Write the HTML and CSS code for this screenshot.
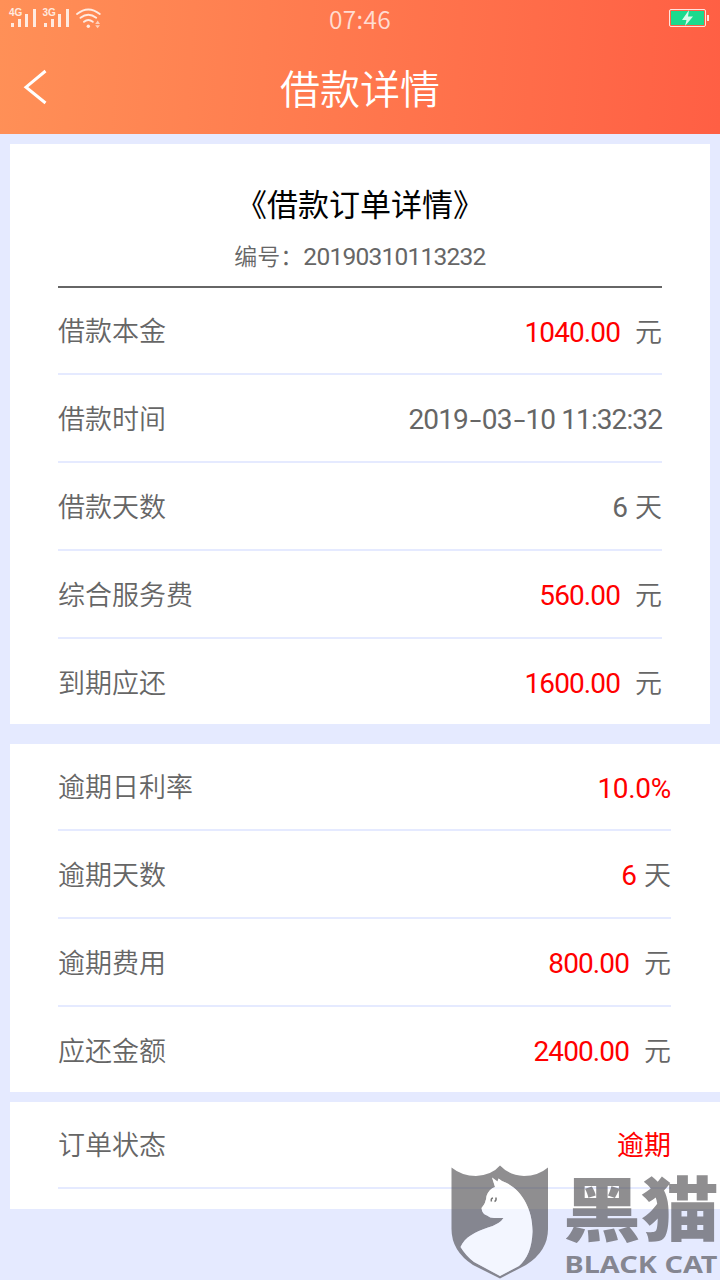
FILE: index.html
```html
<!DOCTYPE html>
<html lang="zh-CN">
<head>
    <meta charset="UTF-8">
    <meta name="viewport" content="width=device-width, initial-scale=1.0">
    <title>借款详情</title>
    <link rel="stylesheet" href="styles.css">
</head>
<body>
    <header class="header">
        <!-- Status bar -->
        <div class="status-bar">
            <svg class="signals" width="104" height="32" viewBox="0 0 104 32">
                <g fill="#fff" fill-opacity=".82">
                    <text x="9" y="16" class="net">4G</text>
                    <path d="M11 23h3v4h-3zM18 19h3v8h-3zM25 14h3v13h-3zM33 9h3v18h-3z"/>
                    <text x="42.5" y="16" class="net">3G</text>
                    <path d="M44 23h3v4h-3zM51 19h3v8h-3zM58 14h3v13h-3zM66 9h3v18h-3z"/>
                    <circle cx="88.3" cy="26.2" r="1.7"/>
                    <path d="M95.2 24l2.5-3.5 2.3 3.5zM95.2 25.2h4.8l-2.4 3z" fill-opacity=".6"/>
                </g>
                <g fill="none" stroke="#fff" stroke-opacity=".82" stroke-width="1.9" stroke-linecap="round">
                    <path d="M77 14Q88.3 4.8 99.8 14M80.5 17.8Q88.3 11.8 96.2 17.8M84 21.8Q88.3 18.2 92.8 21.8"/>
                </g>
            </svg>
            <span class="clock">07:46</span>
            <svg class="battery" width="42" height="32" viewBox="0 0 42 32">
                <rect x="1.5" y="9.5" width="36" height="17" rx="1.5" fill="none" stroke="#fff" stroke-opacity=".82"/>
                <rect x="3" y="11" width="33" height="14" fill="#1bda8d"/>
                <path d="M21 10l-7 10h4.500l-1.500 6 8-9.500h-5z" fill="#d8faea"/>
                <path d="M39 15h2v6h-2z" fill="#fff" fill-opacity=".82"/>
            </svg>
        </div>
        <div class="nav">
            <svg class="back" width="26" height="40" viewBox="0 0 26 40">
                <path d="M22.500 4L3 20.200l19.500 15.800" fill="none" stroke="#fff" stroke-width="3"/>
            </svg>
            <h1>借款详情</h1>
        </div>
    </header>

    <!-- Order detail -->
    <section class="card order">
        <div class="order-head">
            <h2>《借款订单详情》</h2>
            <p>编号：<span class="serial">20190310113232</span></p>
        </div>
        <div class="rows">
            <div class="row"><span>借款本金</span><span class="value"><b class="num">1040.00</b><i class="unit">元</i></span></div>
            <div class="row"><span>借款时间</span><span class="value date">2019<s>-</s>03<s>-</s>10 11:32:32</span></div>
            <div class="row"><span>借款天数</span><span class="value">6<i class="unit day">天</i></span></div>
            <div class="row"><span>综合服务费</span><span class="value"><b class="num">560.00</b><i class="unit">元</i></span></div>
            <div class="row"><span>到期应还</span><span class="value"><b class="num">1600.00</b><i class="unit">元</i></span></div>
        </div>
    </section>

    <!-- Overdue -->
    <section class="card overdue">
        <div class="rows">
            <div class="row"><span>逾期日利率</span><span class="value"><b class="num percent">10.0%</b></span></div>
            <div class="row"><span>逾期天数</span><span class="value"><b class="num">6</b><i class="unit day">天</i></span></div>
            <div class="row"><span>逾期费用</span><span class="value"><b class="num">800.00</b><i class="unit">元</i></span></div>
            <div class="row"><span>应还金额</span><span class="value"><b class="num">2400.00</b><i class="unit">元</i></span></div>
        </div>
    </section>

    <!-- Status -->
    <section class="card status">
        <div class="row"><span>订单状态</span><span class="state">逾期</span></div>
    </section>

    <svg class="watermark" width="280" height="130" viewBox="0 0 280 130">
        <path class="ink" fill-rule="evenodd" d="M11.500 17.500Q22 26 36 26Q52 25 60 15.500Q69 25 84 26Q98 26 108 17.500V79Q108 101 86 115L60 128.500L33 115Q11.500 101 11.500 79ZM52 27.500L57.500 31.500L58.500 28.500L62 31C80 37 93 58 92.500 82C92 98 87 109 79 116L60 126L34 112Q26 106 20.500 97C25 87 35 82 48 77.500Q60 74 63.500 68H54Q50 68 47 65.500Q42 64 41.500 58Q46 53 46.500 46Q49 39 55 37Z"/>
        <path class="cat" d="M52 27.500L57.500 31.500L58.500 28.500L62 31C80 37 93 58 92.500 82C92 98 87 109 79 116L60 126L34 112Q26 106 20.500 97C25 87 35 82 48 77.500Q60 74 63.500 68H54Q50 68 47 65.500Q42 64 41.500 58Q46 53 46.500 46Q49 39 55 37Z"/>
        <path class="eye" d="M51.500 51.500q-1-3 1.500-3.500M54.500 51.500q2-1 1.500-4"/>
        <text class="brand ink" x="123" y="86" textLength="156" lengthAdjust="spacingAndGlyphs">黑猫</text>
        <text class="brand-en ink" x="124.500" y="122.500" textLength="153" lengthAdjust="spacingAndGlyphs">BLACK CAT</text>
    </svg>
</body>
</html>
```
FILE: styles.css
```css
* {
    box-sizing: border-box;
}

body {
    position: relative;
    margin: 0;
    height: 1280px;
    overflow: hidden;
    background: #e5eaff;
    color: #666;
    font-family: Roboto, "Noto Sans CJK SC", sans-serif;
    font-size: 27px;
}

h1, h2, p {
    margin: 0;
    font-weight: 350;
}

.header {
    height: 134px;
    background: linear-gradient(94deg, #ff9057, #ff5f44);
    color: #fff;
}

.status-bar {
    display: grid;
    grid-template-columns: 1fr auto 1fr;
    height: 38px;
}

.net {
    font: bold 10px "Liberation Sans", sans-serif;
}

.clock {
    font: 350 24.5px/38px "Noto Sans CJK SC", sans-serif;
    letter-spacing: 0.3px;
    opacity: 0.75;
}

.battery {
    justify-self: end;
    margin-right: 10px;
}

.nav {
    display: grid;
    grid-template-columns: 60px 1fr 60px;
    align-items: center;
    height: 96px;
}

.back {
    margin-left: 23px;
}

.nav h1 {
    text-align: center;
    font: 350 40px/98px "Noto Sans CJK SC", sans-serif;
}

.card {
    margin-left: 10px;
    padding: 0 49px 0 48px;
    background: #fff;
}

.order {
    margin-top: 10px;
    margin-right: 10px;
    padding-right: 48px;
    height: 580px;
}

.order-head {
    height: 144px;
    padding-top: 36px;
    border-bottom: 2px solid #666;
    text-align: center;
}

.order-head h2 {
    height: 49px;
    color: #000;
    font: 400 31px/46px "Noto Sans CJK SC", sans-serif;
}

.order-head p {
    font-size: 23px;
    line-height: 56px;
}

.serial {
    font-size: 24.5px;
    font-weight: 400;
    letter-spacing: -0.75px;
}

.overdue {
    margin-top: 20px;
    height: 348px;
}

.status {
    margin-top: 10px;
    height: 107px;
}

.row {
    display: flex;
    justify-content: space-between;
    height: 88px;
    border-bottom: 2px solid #e5eaff;
    line-height: 90px;
    font-weight: 350;
}

.row:first-child {
    height: 87px;
    line-height: 89px;
}

.rows .row:last-child {
    height: 85px;
    border-bottom: 0;
}

.value {
    font-size: 28px;
    font-weight: 400;
    letter-spacing: -0.9px;
}

.num {
    color: #f00;
    font-weight: 400;
}

.percent {
    letter-spacing: -0.3px;
}

.unit {
    margin-left: 15px;
    font-size: 27px;
    font-style: normal;
    font-weight: 350;
    letter-spacing: 0;
}

.day {
    margin-left: 8px;
}

/* wide dashes in the timestamp */
.date s {
    display: inline-block;
    width: 14px;
    text-align: center;
    text-decoration: none;
    transform: scaleX(1.5);
}

.state {
    color: #f00;
    font-weight: 400;
}

.watermark {
    position: absolute;
    left: 440px;
    top: 1150px;
}

.ink {
    fill: rgba(68, 66, 70, 0.6);
}

.cat {
    fill: rgba(255, 255, 255, 0.55);
}

.eye {
    fill: none;
    stroke: #777;
    stroke-width: 1.5;
}

.brand {
    font: 900 70px "Noto Sans CJK SC", sans-serif;
}

.brand-en {
    font: 700 22.5px "Noto Sans", sans-serif;
}
```
